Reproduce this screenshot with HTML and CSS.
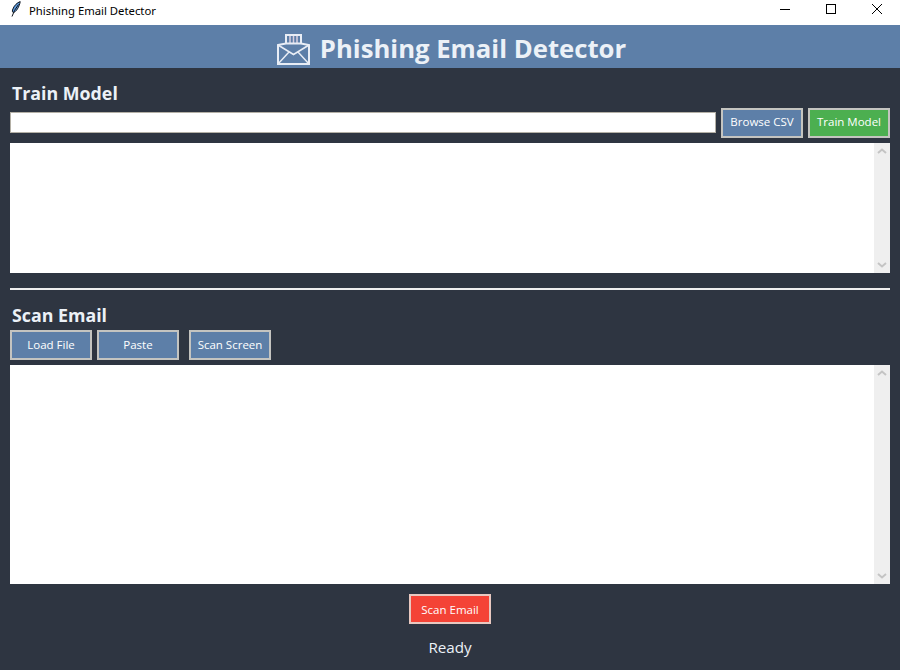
FILE: index.html
```html
<!DOCTYPE html>
<html lang="en">
<head>
<meta charset="utf-8">
<title>Phishing Email Detector</title>
<link rel="stylesheet" href="styles.css">
</head>
<body>
<div class="window">
  <div class="titlebar">
    <svg class="feather" width="10" height="16" viewBox="0 0 10 16">
      <path d="M9.2 0.6C6.5 1.5 2.8 4.5 1.5 9 1.2 10.5 1.6 11.5 2.4 11.5 5 11 8.4 6 9.2 0.6Z" fill="#5d9be0" stroke="#10151c" stroke-width="1"/>
      <path d="M7.5 3.5 3.5 9.5 1 15.5" fill="none" stroke="#10151c" stroke-width="1"/>
    </svg>
    <span class="title-text">Phishing Email Detector</span>
    <div class="controls">
      <svg class="control" width="46" height="18" viewBox="0 0 46 18"><path d="M18 9.5H28" stroke="#000" stroke-width="1"/></svg>
      <svg class="control" width="46" height="18" viewBox="0 0 46 18"><rect x="18.5" y="4.5" width="9" height="9" fill="none" stroke="#000" stroke-width="1"/></svg>
      <svg class="control" width="46" height="18" viewBox="0 0 46 18"><path d="M18 4L28 14M28 4L18 14" stroke="#000" stroke-width="1"/></svg>
    </div>
  </div>
  <header class="banner">
    <svg class="mail-icon" width="33" height="31" viewBox="0 0 33 31">
      <g fill="none" stroke="#e8edf5" stroke-width="2">
        <path d="M9 10V1H24V10"/>
        <path d="M13 2V9M16.5 2V9M20 2V9" stroke="#d9cfe0" stroke-width="1.5"/>
        <path d="M1 11L9 9.5H24L32 11V30H1Z"/>
        <path d="M1 11L16.5 20.5L32 11M1 30L12 18M32 30L21 18" stroke-width="1.5"/>
      </g>
    </svg>
    <h1 class="banner-title">Phishing Email Detector</h1>
  </header>
  <main class="content">
    <h2 class="section-title train-title">Train Model</h2>
    <div class="file-row">
      <input class="path-input" type="text" aria-label="CSV path">
      <button class="btn btn-blue">Browse CSV</button>
      <button class="btn btn-green">Train Model</button>
    </div>
    <div class="textbox textbox-train">
      <div class="scrollbar">
        <svg class="arrow" width="10" height="6" viewBox="0 0 10 6"><path d="M1 5L5 1.5L9 5" fill="none" stroke="#c4c4c4" stroke-width="2"/></svg>
        <svg class="arrow" width="10" height="6" viewBox="0 0 10 6"><path d="M1 1L5 4.5L9 1" fill="none" stroke="#c4c4c4" stroke-width="2"/></svg>
      </div>
    </div>
    <hr class="divider">
    <h2 class="section-title scan-title">Scan Email</h2>
    <div class="tool-row">
      <button class="btn btn-blue">Load File</button>
      <button class="btn btn-blue">Paste</button>
      <button class="btn btn-blue btn-gap">Scan Screen</button>
    </div>
    <div class="textbox textbox-scan">
      <div class="scrollbar">
        <svg class="arrow" width="10" height="6" viewBox="0 0 10 6"><path d="M1 5L5 1.5L9 5" fill="none" stroke="#c4c4c4" stroke-width="2"/></svg>
        <svg class="arrow" width="10" height="6" viewBox="0 0 10 6"><path d="M1 1L5 4.5L9 1" fill="none" stroke="#c4c4c4" stroke-width="2"/></svg>
      </div>
    </div>
    <div class="scan-row">
      <button class="btn btn-red">Scan Email</button>
    </div>
    <div class="status">Ready</div>
  </main>
</div>
</body>
</html>
```

FILE: styles.css
```css
* { box-sizing: border-box; }
html, body { margin: 0; padding: 0; }
body { width: 900px; height: 670px; overflow: hidden; font-family: "Open Sans", "Noto Sans", sans-serif; }
.window { width: 900px; height: 670px; display: flex; flex-direction: column; background: #2e3541; }
.titlebar { height: 25px; background: #fff; display: flex; align-items: center; padding-left: 11px; flex: none; }
.feather { flex: none; margin-top: -8px; }
.title-text { margin-left: 8px; font-size: 11.3px; color: #000; margin-top: -5px; font-family: "Noto Sans", sans-serif; }
.controls { margin-left: auto; display: flex; margin-top: -7px; }
.control { display: block; }
.banner { height: 43px; background: #5d7fa8; display: flex; align-items: center; justify-content: center; gap: 10px; flex: none; padding-left: 3px; }
.mail-icon { flex: none; margin-top: 6px; }
.banner-title { margin: 0; font-size: 25.7px; font-weight: 700; color: #ecf1f7; line-height: 43px; margin-top: 4px; white-space: nowrap; font-family: "Open Sans", sans-serif; }
.content { flex: 1; padding: 0 10px; display: flex; flex-direction: column; }
.section-title { margin: 0 0 0 2px; font-size: 17.8px; font-weight: 700; color: #ecf1f7; line-height: 24px; }
.train-title { padding-top: 13px; height: 39px; }
.file-row { display: flex; align-items: center; height: 31px; }
.path-input { flex: 1; min-width: 0; height: 21px; border: 1px solid #b4b0a6; background: #fff; padding: 0; margin-right: 5px; outline: none; }
.btn { width: 82px; height: 30px; border: 2px solid #c4c4c0; color: #fff; font-family: "Open Sans", "Noto Sans", sans-serif; font-size: 11.5px; padding: 0 0 2px; flex: none; white-space: nowrap; }
.btn-blue { background: #5d7fa8; }
.btn-green { background: #4caf50; margin-left: 5px; }
.btn-red { background: #f44336; border-color: #e8c8c0; padding-bottom: 0; }
.btn-gap { margin-left: 5px; }
.textbox { background: #fff; display: flex; justify-content: flex-end; flex: none; }
.textbox-train { height: 130px; margin-top: 5px; }
.textbox-scan { height: 219px; margin-top: 5px; }
.scrollbar { width: 16px; background: #efefef; display: flex; flex-direction: column; justify-content: space-between; align-items: center; padding: 5px 0; }
.arrow { display: block; }
.divider { margin: 15px 0 0; height: 2px; border: 0; background: #eeeeee; flex: none; }
.scan-title { height: 40px; padding-top: 13px; }
.tool-row { display: flex; gap: 5px; height: 30px; }
.scan-row { display: flex; justify-content: center; margin-top: 10px; }
.status { text-align: center; color: #ecf1f7; font-size: 15.2px; line-height: 20px; margin-top: 13px; }
```
